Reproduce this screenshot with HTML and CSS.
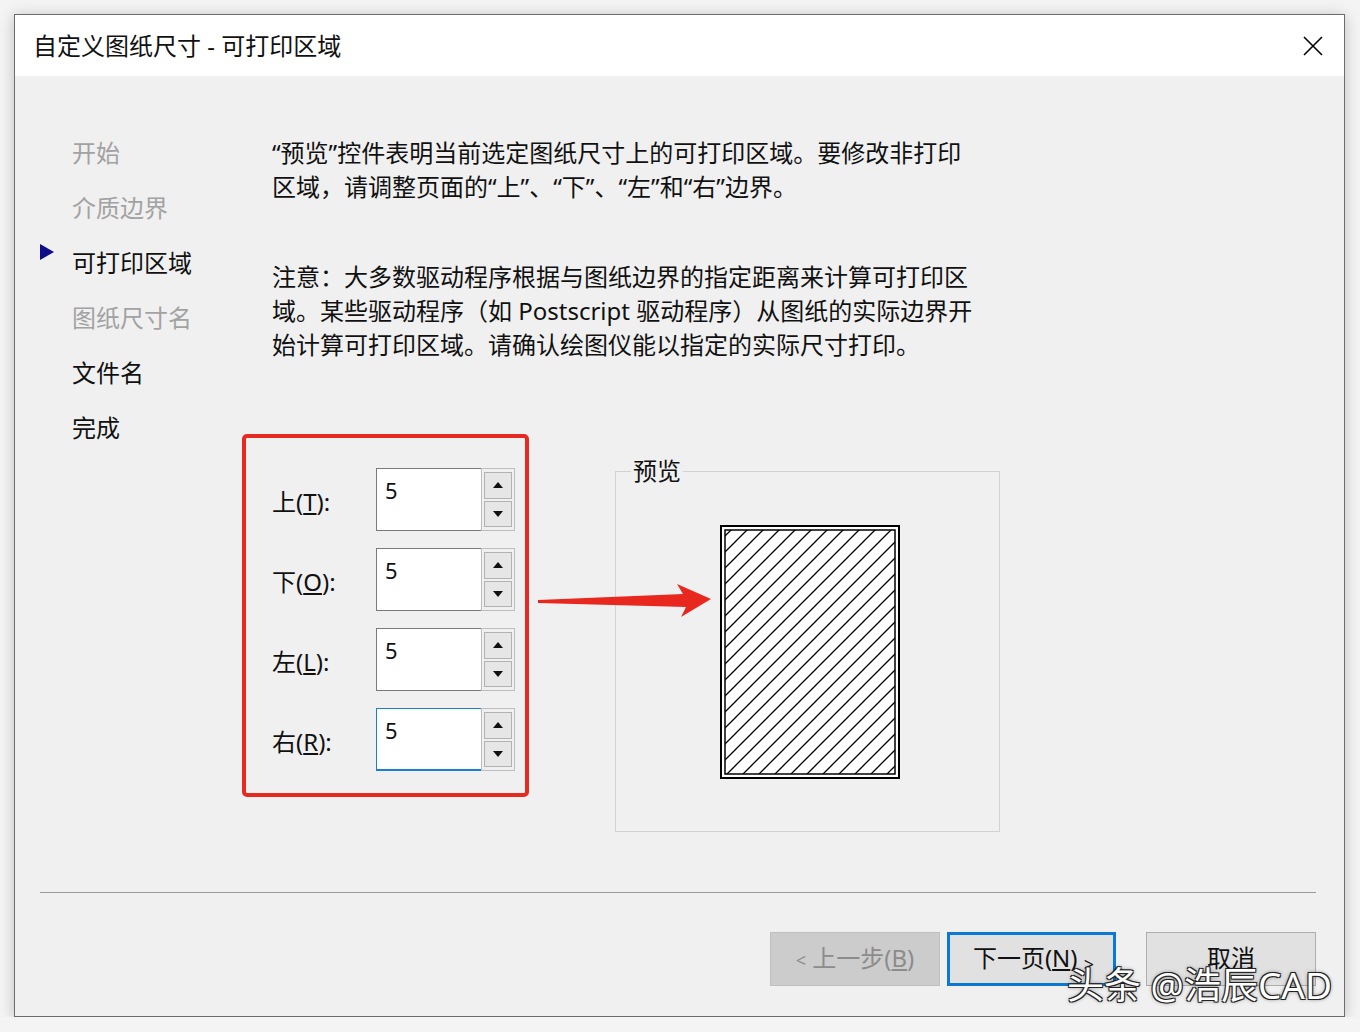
FILE: index.html
```html
<!DOCTYPE html>
<html lang="zh-CN">
<head>
    <meta charset="UTF-8">
    <meta name="viewport" content="width=device-width, initial-scale=1.0">
    <title>自定义图纸尺寸 - 可打印区域</title>
    <link rel="stylesheet" href="styles.css">
</head>
<body>
    <div class="dialog">
        <div class="titlebar">
            <span class="title">自定义图纸尺寸 - 可打印区域</span>
            <svg class="close" width="22" height="22" viewBox="0 0 22 22">
                <path d="M2 2 L20 20 M20 2 L2 20" stroke="#000" stroke-width="1.6" fill="none"/>
            </svg>
        </div>

        <div class="dialog-body">
            <div class="content">
                <ul class="steps">
                    <li class="step">开始</li>
                    <li class="step">介质边界</li>
                    <li class="step current">可打印区域</li>
                    <li class="step">图纸尺寸名</li>
                    <li class="step todo">文件名</li>
                    <li class="step todo">完成</li>
                </ul>

                <div class="main">
                    <p class="text">“预览”控件表明当前选定图纸尺寸上的可打印区域。要修改非打印<br>区域，请调整页面的“上”、“下”、“左”和“右”边界。</p>
                    <p class="text note">注意：大多数驱动程序根据与图纸边界的指定距离来计算可打印区<br>域。某些驱动程序（如 Postscript 驱动程序）从图纸的实际边界开<br>始计算可打印区域。请确认绘图仪能以指定的实际尺寸打印。</p>

                    <div class="form-row">
                        <div class="margins">
                            <div class="field-row">
                                <label>上(<u>T</u>):</label>
                                <div class="spin">
                                    <input class="spin-input" type="text" value="5">
                                    <div class="spin-buttons">
                                        <span class="spin-btn"><i class="tri-up"></i></span>
                                        <span class="spin-btn"><i class="tri-down"></i></span>
                                    </div>
                                </div>
                            </div>
                            <div class="field-row">
                                <label>下(<u>O</u>):</label>
                                <div class="spin">
                                    <input class="spin-input" type="text" value="5">
                                    <div class="spin-buttons">
                                        <span class="spin-btn"><i class="tri-up"></i></span>
                                        <span class="spin-btn"><i class="tri-down"></i></span>
                                    </div>
                                </div>
                            </div>
                            <div class="field-row">
                                <label>左(<u>L</u>):</label>
                                <div class="spin">
                                    <input class="spin-input" type="text" value="5">
                                    <div class="spin-buttons">
                                        <span class="spin-btn"><i class="tri-up"></i></span>
                                        <span class="spin-btn"><i class="tri-down"></i></span>
                                    </div>
                                </div>
                            </div>
                            <div class="field-row">
                                <label>右(<u>R</u>):</label>
                                <div class="spin focused">
                                    <input class="spin-input" type="text" value="5">
                                    <div class="spin-buttons">
                                        <span class="spin-btn"><i class="tri-up"></i></span>
                                        <span class="spin-btn"><i class="tri-down"></i></span>
                                    </div>
                                </div>
                            </div>
                        </div>

                        <!-- annotation arrow drawn over the dialog -->
                        <svg class="arrow" width="178" height="38" viewBox="0 0 178 38">
                            <polygon points="2,18 147,12 141,2 175,17 145,35 150,25 2,21" fill="#e8281f"/>
                        </svg>

                        <fieldset class="preview">
                            <legend>预览</legend>
                            <svg class="paper" width="180" height="254" viewBox="0 0 180 254">
                                <defs>
                                    <pattern id="hatch" width="16" height="16" patternUnits="userSpaceOnUse">
                                        <path d="M-4 4 L4 -4 M0 16 L16 0 M12 20 L20 12" stroke="#000" stroke-width="1.3"/>
                                    </pattern>
                                </defs>
                                <rect x="1" y="1" width="178" height="252" fill="#fff" stroke="#000" stroke-width="2"/>
                                <rect x="5" y="5" width="170" height="244" fill="url(#hatch)" stroke="#000" stroke-width="1.5"/>
                            </svg>
                        </fieldset>
                    </div>
                </div>
            </div>

            <hr class="sep">

            <div class="buttons">
                <button class="btn btn-back"><span class="chev">&lt;</span> 上一步(<u>B</u>)</button>
                <button class="btn btn-next">下一页(<u>N</u>) <span class="chev low">&gt;</span></button>
                <button class="btn">取消</button>
            </div>
        </div>
    </div>

    <div class="watermark">头条 @浩辰CAD</div>
</body>
</html>
```

FILE: styles.css
```css
body {
    margin: 0;
    background-color: #f4f4f4;
    font-family: "Noto Sans", "Noto Sans CJK SC", sans-serif;
    color: #111;
}

.dialog {
    margin: 14px 0 0 14px;
    width: 1331px;
    height: 1003px;
    box-sizing: border-box;
    border: 1px solid #6c6c6c;
    background-color: #f0f0f0;
    box-shadow: 0 2px 14px rgba(0, 0, 0, 0.22);
    display: flex;
    flex-direction: column;
}

.titlebar {
    height: 61px;
    flex: none;
    background: #fff;
    display: flex;
    align-items: center;
    justify-content: space-between;
    padding: 0 20px 0 18px;
}

.title {
    font-size: 24px;
    line-height: 30px;
}

.close {
    display: block;
}

.content {
    display: flex;
    align-items: flex-start;
}

/* wizard steps on the left */
.steps {
    list-style: none;
    margin: 0;
    padding: 49px 0 0 25px;
    width: 227px;
    box-sizing: border-box;
}

.step {
    display: flex;
    height: 55px;
    line-height: 55px;
    font-size: 24px;
    color: #a2a2a2;
}

.step::before {
    content: "";
    flex: none;
    width: 14px;
    height: 16px;
    margin: 9px 18px 0 0;
}

.step.current,
.step.todo {
    color: #111;
}

.step.current::before {
    background: #0d0d8a;
    clip-path: polygon(0 0, 100% 50%, 0 100%);
}

.main {
    padding-top: 60px;
}

.text {
    margin: 0 0 0 30px;
    font-size: 24px;
    line-height: 34px;
    white-space: nowrap;
}

.note {
    margin-top: 56px;
}

.form-row {
    position: relative;
    display: flex;
    align-items: flex-start;
    margin-top: 72px;
}

/* red highlight around the margin fields */
.margins {
    border: 4px solid #e62a22;
    border-radius: 5px;
    padding: 30px 10px 22px 26px;
    display: flex;
    flex-direction: column;
    gap: 17px;
}

.field-row {
    display: flex;
    align-items: center;
    height: 63px;
}

.field-row label {
    width: 104px;
    font-size: 24px;
    line-height: 30px;
    padding-top: 4px;
}

.spin {
    display: flex;
    width: 139px;
    height: 63px;
}

.spin-input {
    width: 105px;
    height: 63px;
    box-sizing: border-box;
    margin: 0;
    background: #fff;
    border: 1px solid #7a7a7a;
    border-right: none;
    outline: none;
    font-family: "Noto Sans", sans-serif;
    font-size: 22px;
    line-height: 26px;
    color: #111;
    padding: 8px 8px 27px;
}

.spin.focused .spin-input {
    border-color: #1a7fd4;
    border-bottom-width: 2px;
}

.spin-buttons {
    width: 34px;
    box-sizing: border-box;
    border: 1px solid #bdbdbd;
    padding: 3px 2px;
    display: flex;
    flex-direction: column;
    gap: 2px;
    background: #f0f0f0;
}

.spin-btn {
    flex: 1;
    background: #e6e6e6;
    border: 1px solid #b2b2b2;
    display: flex;
    align-items: center;
    justify-content: center;
}

.tri-up,
.tri-down {
    width: 0;
    height: 0;
    border-left: 5px solid transparent;
    border-right: 5px solid transparent;
}

.tri-up {
    border-bottom: 6px solid #111;
}

.tri-down {
    border-top: 6px solid #111;
}

.arrow {
    position: absolute;
    left: 294px;
    top: 148px;
}

.preview {
    margin: 23px 0 0 86px;
    width: 385px;
    height: 375px;
    box-sizing: border-box;
    border: 1px solid #d2d2d2;
    padding: 0;
    min-width: 0;
}

.preview legend {
    font-size: 24px;
    line-height: 28px;
    padding: 0 2px;
    margin-left: 15px;
}

.paper {
    display: block;
    margin: 40px 0 0 104px;
}

.sep {
    margin: 60px 28px 0 25px;
    border: 0;
    border-top: 1px solid #999;
    height: 0;
}

.buttons {
    display: flex;
    justify-content: flex-end;
    padding-right: 28px;
    margin-top: 39px;
}

.btn {
    width: 170px;
    height: 54px;
    box-sizing: border-box;
    font-family: "Noto Sans", "Noto Sans CJK SC", sans-serif;
    font-size: 24px;
    color: #111;
    background: #e1e1e1;
    border: 1px solid #adadad;
    padding: 0 0 5px;
}

.btn-back {
    background: #cccccc;
    border-color: #bfbfbf;
    color: #8c8c8c;
    margin-right: 7px;
}

.btn-next {
    width: 169px;
    border: 3px solid #0a78d4;
    margin-right: 30px;
    padding-left: 4px;
}

.chev {
    font-size: 18px;
}

.chev.low {
    position: relative;
    top: 4px;
}

/* site watermark stamped over the screenshot */
.watermark {
    position: absolute;
    left: 1067px;
    top: 965px;
    font-size: 37px;
    line-height: 40px;
    color: #fff;
    white-space: nowrap;
    text-shadow: 1px 1px 0 #222, -1px -1px 0 #222, 1px -1px 0 #222, -1px 1px 0 #222, 0 0 4px rgba(0, 0, 0, 0.6);
}
```
